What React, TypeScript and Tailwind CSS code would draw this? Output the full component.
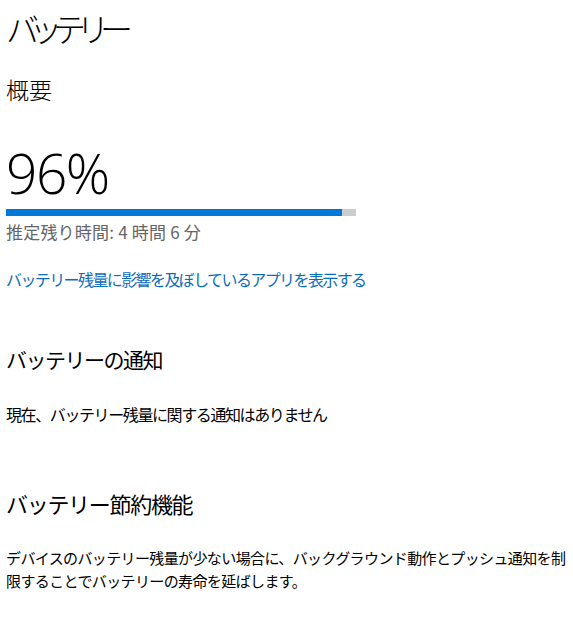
import React from "react";

const jp = { fontFamily: '"Noto Sans CJK JP", "Noto Sans", sans-serif' };

export default function App() {
  return (
    <div className="w-[573px] h-[623px] bg-white text-black overflow-hidden pl-[6px]" style={jp}>
      <div className="pt-[9px] text-[33px] leading-[38px] font-light tracking-[-9.5px]">バッテリー</div>
      <div className="mt-[28px] text-[23px] leading-[28px] font-light tracking-[0px]">概要</div>
      <div
        className="mt-[42px] text-[55px] leading-[55px] font-light tracking-[-1.5px]"
        style={{ fontFamily: '"Open Sans", sans-serif' }}
      >
        96%
      </div>
      <div className="mt-[9px] w-[350px] h-[7px] bg-[#cccccc] flex">
        <div className="h-full bg-[#0078d7]" style={{ width: "96%" }} />
      </div>
      <div className="mt-[5px] text-[17px] leading-[22px] text-[#666666] tracking-[0.2px]">推定残り時間: 4 時間 6 分</div>
      <div className="mt-[25px] text-[16px] leading-[22px] text-[#0b6cbd] tracking-[-1.6px]">
        バッテリー残量に影響を及ぼしているアプリを表示する
      </div>
      <div className="mt-[55px] text-[21px] leading-[28px] tracking-[-1.5px]">バッテリーの通知</div>
      <div className="mt-[30px] text-[16px] leading-[22px] tracking-[-1.4px]">現在、バッテリー残量に関する通知はありません</div>
      <div className="mt-[64px] text-[22px] leading-[28px] tracking-[-1.3px]">バッテリー節約機能</div>
      <div className="mt-[29px] w-[567px] text-[15px] leading-[23px] tracking-[-0.62px]">
        デバイスのバッテリー残量が少ない場合に、バックグラウンド動作とプッシュ通知を制限することでバッテリーの寿命を延ばします。
      </div>
    </div>
  );
}
